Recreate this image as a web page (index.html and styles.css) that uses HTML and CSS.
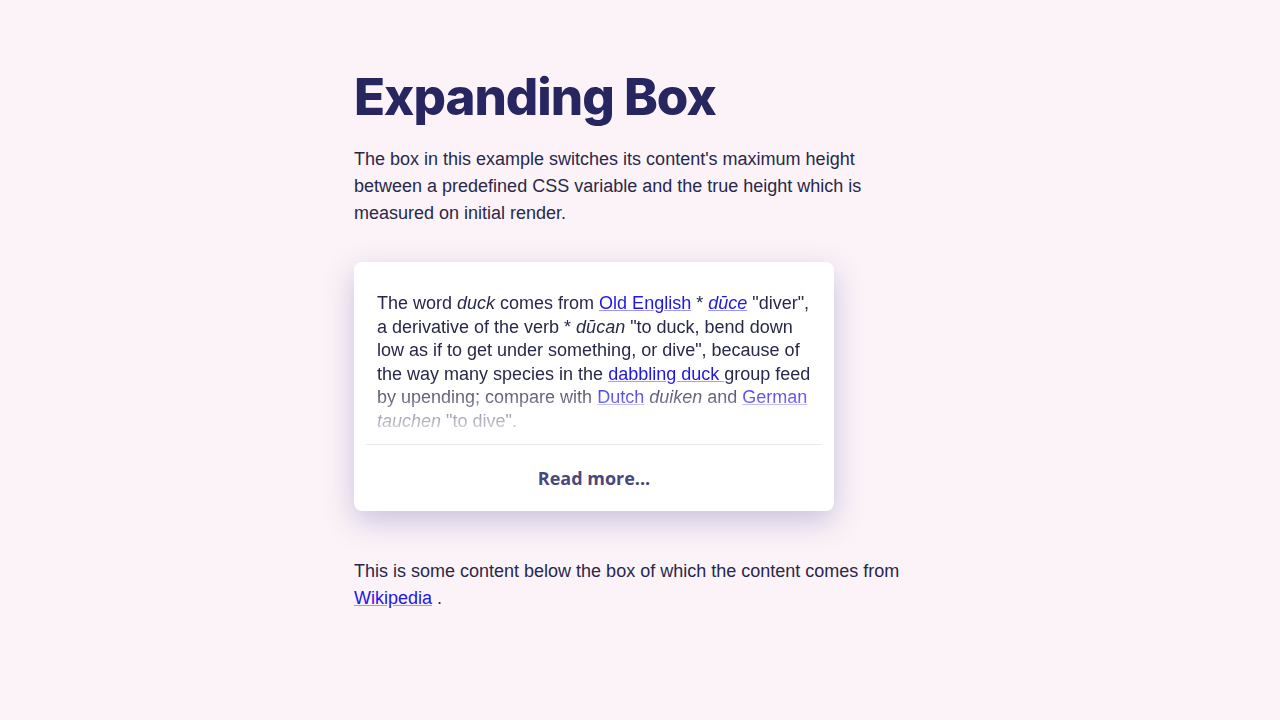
FILE: index.html
```html
<!DOCTYPE html>
<html>
<head>
    <title>Expanding Box</title>
    <link rel="stylesheet" href="styles.css">
</head>
<body>
    <div class="container">
        <h1 class="title">Expanding Box</h1>
        <p class="intro">The box in this example switches its content's maximum height between a predefined CSS variable and the true height which is measured on initial render.</p>

        <!-- Expanding box -->
        <div class="box">
            <div class="box-content">
                <p>The word <i>duck</i> comes from <a href="#">Old English</a> * <i><a href="#">dūce</a></i> "diver", a derivative of the verb * <i>dūcan</i> "to duck, bend down low as if to get under something, or dive", because of the way many species in the <a href="#">dabbling duck </a>group feed by upending; compare with <a href="#">Dutch</a> <i>duiken</i> and <a href="#">German</a> <i>tauchen</i> "to dive".</p>
            </div>
            <button class="read-more">Read more...</button>
        </div>

        <p class="below">This is some content below the box of which the content comes from <a href="#">Wikipedia</a> .</p>
    </div>
</body>
</html>
```

FILE: styles.css
```css
body {
    font-family: "Liberation Sans", Arial, sans-serif;
    margin: 0;
    padding: 0;
    background-color: #fcf3f8;
    color: #28284a;
}
.container {
    max-width: 572px;
    margin: 0 auto;
    padding-top: 66px;
}
.title {
    font-family: Inter, "Noto Sans", sans-serif;
    font-weight: 800;
    font-size: 51px;
    letter-spacing: -1px;
    color: #272661;
    margin: 0 0 19px 0;
}
.intro {
    font-size: 18px;
    line-height: 27px;
    margin: 0 0 35px 0;
}
a {
    color: #1f16e8;
    text-decoration-color: #9d9af5;
}
.box {
    width: 480px;
    background-color: white;
    border-radius: 8px;
    box-shadow: 0 10px 30px rgba(70, 70, 150, 0.28);
}
/* content is clipped and faded out towards the bottom */
.box-content {
    padding: 30px 23px 10px 23px;
    max-height: 158px;
    overflow: hidden;
    -webkit-mask-image: linear-gradient(to bottom, black 64%, transparent 100%);
    mask-image: linear-gradient(to bottom, black 64%, transparent 100%);
}
.box-content p {
    font-size: 18px;
    line-height: 23.6px;
    margin: 0;
}
.read-more {
    display: block;
    width: calc(100% - 24px);
    margin: 0 12px;
    height: 67px;
    background: none;
    border: none;
    border-top: 1px solid #ebe8ef;
    font-family: "Open Sans", sans-serif;
    font-weight: 700;
    font-size: 18px;
    color: #48487c;
    cursor: pointer;
}
.below {
    font-size: 18px;
    line-height: 27px;
    margin: 47px 0 0 0;
}
```
